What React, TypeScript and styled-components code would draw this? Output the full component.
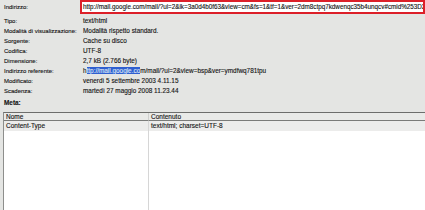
import styled, { createGlobalStyle } from "styled-components";

const GlobalStyle = createGlobalStyle`
  html, body {
    margin: 0;
    padding: 0;
    background: #e4e5e3;
    overflow: hidden;
  }
  body {
    font-family: "Liberation Sans", Arial, sans-serif;
    font-size: 6px;
    color: #141414;
    -webkit-text-stroke: 0.12px #141414;
  }
`;

const rows: [string, string][] = [
  ["Tipo:", "text/html"],
  ["Modalità di visualizzazione:", "Modalità rispetto standard."],
  ["Sorgente:", "Cache su disco"],
  ["Codifica:", "UTF-8"],
  ["Dimensione:", "2,7 kB (2.766 byte)"],
];

export default function App() {
  return (
    <>
      <GlobalStyle />
      <Page>
        <InfoGrid>
          <Label $top>Indirizzo:</Label>
          <UrlBox>
            http://mail.google.com/mail/?ui=2&amp;ik=3a0d4b0f63&amp;view=cm&amp;fs=1&amp;tf=1&amp;ver=2dm8ctpq7kdwenqc35b4unqcv#cmid%253D2
          </UrlBox>
          {rows.map(([label, value]) => (
            <Row key={label}>
              <Label>{label}</Label>
              <Value>{value}</Value>
            </Row>
          ))}
          <Row>
            <Label>Indirizzo referente:</Label>
            <Value>
              h<Selected>ttp://mail.google.co</Selected>m/mail/?ui=2&amp;view=bsp&amp;ver=ymdfwq781tpu
            </Value>
          </Row>
          <Row>
            <Label>Modificato:</Label>
            <Value>venerdì 5 settembre 2003 4.11.15</Value>
          </Row>
          <Row>
            <Label>Scadenza:</Label>
            <Value>martedì 27 maggio 2008 11.23.44</Value>
          </Row>
        </InfoGrid>
        <SectionTitle>Meta:</SectionTitle>
        <Table>
          <HeaderCell>Nome</HeaderCell>
          <HeaderCell $last>Contenuto</HeaderCell>
          <Cell>Content-Type</Cell>
          <Cell $last>text/html; charset=UTF-8</Cell>
          <Filler />
          <Filler $last />
        </Table>
      </Page>
    </>
  );
}

const Page = styled.div`
  display: flex;
  flex-direction: column;
  height: 210px;
  padding-left: 4px;
`;

const InfoGrid = styled.div`
  display: grid;
  grid-template-columns: 75px 1fr;
`;

const Row = styled.div`
  display: contents;
`;

const Label = styled.div<{ $top?: boolean }>`
  height: 10px;
  line-height: 10px;
  padding-top: ${(p) => (p.$top ? "2px" : "0")};
  white-space: nowrap;
`;

const Value = styled.div`
  height: 10px;
  line-height: 10px;
  padding-left: 4px;
  font-size: 6.4px;
  white-space: nowrap;
`;

const UrlBox = styled.div`
  margin-left: 1px;
  height: 10px;
  line-height: 10px;
  padding: 0 0 0 1px;
  border: 2px solid #dc2029;
  background: #ffffff;
  font-size: 6.3px;
  white-space: nowrap;
  overflow: hidden;
  margin-bottom: 2px;
`;

const Selected = styled.span`
  background: #2f5fd0;
  color: #dfe6f5;
  -webkit-text-stroke: 0.12px #dfe6f5;
`;

const SectionTitle = styled.div`
  font-weight: bold;
  font-size: 6.4px;
  height: 10px;
  line-height: 10px;
  margin-top: 2px;
  margin-bottom: 4px;
`;

const Table = styled.div`
  flex: 1;
  display: grid;
  grid-template-columns: 145px 1fr;
  grid-template-rows: 8px 10px 1fr;
  margin-left: -1px;
  background: #ffffff;
  border-top: 1px solid #6d6e6c;
  border-left: 1px solid #8d8e8c;
  font-size: 6.5px;
`;

const HeaderCell = styled.div<{ $last?: boolean }>`
  background: #e9eae8;
  border-bottom: 1px solid #7a7b79;
  border-right: ${(p) => (p.$last ? "none" : "1px solid #cfd0ce")};
  line-height: 7px;
  padding-left: 2px;
  white-space: nowrap;
`;

const Cell = styled.div<{ $last?: boolean }>`
  background: #ececeb;
  border-right: ${(p) => (p.$last ? "none" : "1px solid #d6d6d6")};
  line-height: 10px;
  padding-left: 2px;
  white-space: nowrap;
`;

const Filler = styled.div<{ $last?: boolean }>`
  border-right: ${(p) => (p.$last ? "none" : "1px solid #d6d6d6")};
`;
